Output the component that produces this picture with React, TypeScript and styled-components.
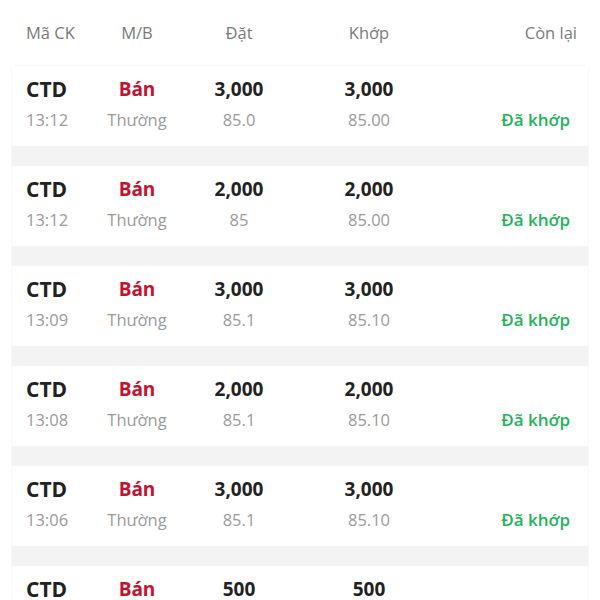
import React from "react";
import styled, { createGlobalStyle } from "styled-components";

const Global = createGlobalStyle`
  html, body { margin: 0; padding: 0; background: #ffffff; }
  body { font-family: "Open Sans", "Noto Sans", sans-serif; }
`;

const Page = styled.div`
  width: 600px;
  background: #fff;
`;

const Header = styled.div`
  display: grid;
  grid-template-columns: 70px 82px 122px 138px 1fr;
  align-items: center;
  height: 66px;
  padding: 0 23px 0 26px;
  box-sizing: border-box;
  font-size: 16.5px;
  color: #7a7a7a;
`;

const HCell = styled.div<{ $align: string }>`
  text-align: ${(p) => p.$align};
  margin-top: -1px;
`;

const List = styled.div`
  margin: 0 12px;
  background: #f3f3f3;
  box-shadow: 0 0 2px rgba(0, 0, 0, 0.08);
  display: flex;
  flex-direction: column;
  gap: 20px;
  padding-bottom: 20px;
`;

const Card = styled.div`
  background: #fff;
  height: 80px;
  box-sizing: border-box;
  padding: 11px 18px 0 14px;
  display: grid;
  grid-template-columns: 70px 82px 122px 138px 1fr;
  grid-template-rows: 25px 35px;
`;

const Main = styled.div<{ $align: string; $color?: string; $size?: number }>`
  font-size: ${(p) => p.$size || 19}px;
  font-weight: 700;
  line-height: 25px;
  color: ${(p) => p.$color || "#222"};
  text-align: ${(p) => p.$align};
`;

const Sub = styled.div<{ $align: string }>`
  font-size: 16.5px;
  line-height: 35px;
  color: #9a9a9a;
  text-align: ${(p) => p.$align};
`;

const Status = styled.div`
  font-size: 17px;
  font-weight: 600;
  line-height: 35px;
  color: #1fb35a;
  text-align: right;
`;

type Row = { time: string; qty: string; price: string; matchPrice: string };

const rows: Row[] = [
  { time: "13:12", qty: "3,000", price: "85.0", matchPrice: "85.00" },
  { time: "13:12", qty: "2,000", price: "85", matchPrice: "85.00" },
  { time: "13:09", qty: "3,000", price: "85.1", matchPrice: "85.10" },
  { time: "13:08", qty: "2,000", price: "85.1", matchPrice: "85.10" },
  { time: "13:06", qty: "3,000", price: "85.1", matchPrice: "85.10" },
  { time: "13:05", qty: "500", price: "85.1", matchPrice: "85.10" },
];

export default function App() {
  return (
    <Page>
      <Global />
      <Header>
        <HCell $align="left">Mã CK</HCell>
        <HCell $align="center">M/B</HCell>
        <HCell $align="center">Đặt</HCell>
        <HCell $align="center">Khớp</HCell>
        <HCell $align="right">Còn lại</HCell>
      </Header>
      <List>
        {rows.map((r, i) => (
          <Card key={i}>
            <Main $align="left" $size={21}>CTD</Main>
            <Main $align="center" $color="#c8102e">Bán</Main>
            <Main $align="center">{r.qty}</Main>
            <Main $align="center">{r.qty}</Main>
            <Main $align="right"></Main>
            <Sub $align="left">{r.time}</Sub>
            <Sub $align="center">Thường</Sub>
            <Sub $align="center">{r.price}</Sub>
            <Sub $align="center">{r.matchPrice}</Sub>
            <Status>Đã khớp</Status>
          </Card>
        ))}
      </List>
    </Page>
  );
}
